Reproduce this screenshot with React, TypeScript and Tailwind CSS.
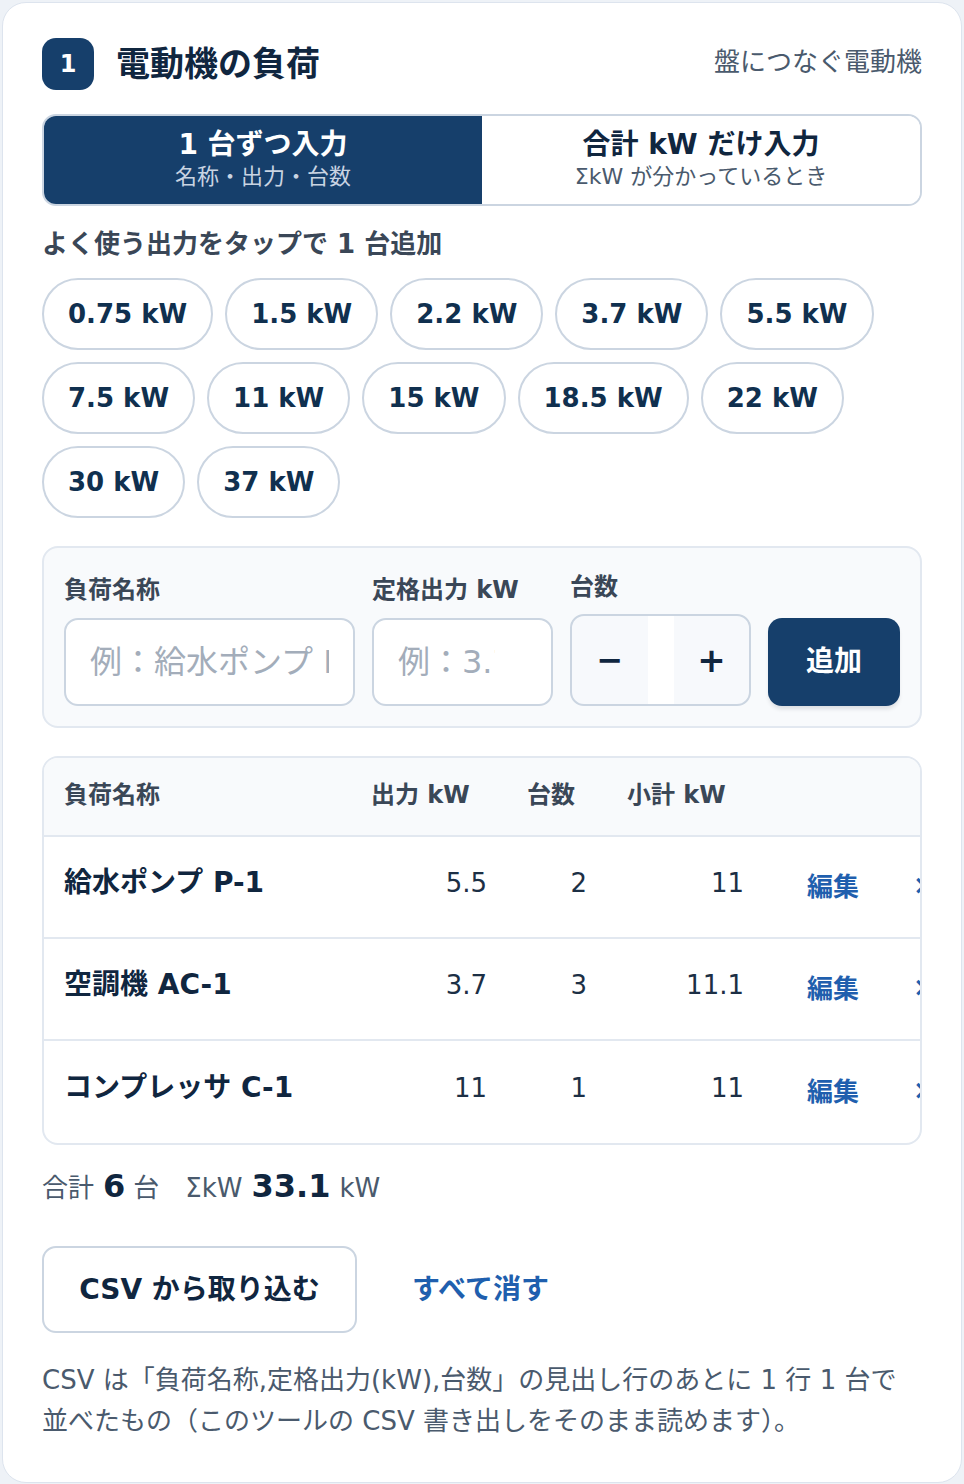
import React from 'react';

const chips = [
  ['0.75 kW', '1.5 kW', '2.2 kW', '3.7 kW', '5.5 kW'],
  ['7.5 kW', '11 kW', '15 kW', '18.5 kW', '22 kW'],
  ['30 kW', '37 kW'],
];

const rows = [
  { name: '給水ポンプ P-1', kw: '5.5', qty: '2', sub: '11' },
  { name: '空調機 AC-1', kw: '3.7', qty: '3', sub: '11.1' },
  { name: 'コンプレッサ C-1', kw: '11', qty: '1', sub: '11' },
];

const cols = 'grid grid-cols-[307px_156px_100px_157px_129px_120px]';

export default function App() {
  return (
    <div className="min-h-screen bg-[#eef2f7] p-[2px] font-['DejaVu_Sans','Noto_Sans_CJK_JP',sans-serif] text-[#10263f]">
      <div className="rounded-[24px] border border-[#dde4ee] bg-white px-[39px] pt-[35px] pb-[40px]">
        {/* header */}
        <div className="flex items-center justify-between">
          <div className="flex items-center gap-[22px]">
            <div className="flex h-[52px] w-[52px] items-center justify-center rounded-[14px] bg-[#163f6b] text-[24px] font-bold text-white">
              1
            </div>
            <h1 className="text-[34px] font-bold leading-none text-[#10263f]">電動機の負荷</h1>
          </div>
          <div className="pb-[4px] text-[26px] text-[#4a5a6d]">盤につなぐ電動機</div>
        </div>

        {/* mode switch */}
        <div className="mt-[24px] grid h-[92px] grid-cols-2 overflow-hidden rounded-[14px] border-2 border-[#cbd5e1]">
          <button className="flex flex-col items-center justify-center bg-[#163f6b] text-white">
            <span className="text-[28px] font-bold leading-[34px]">1 台ずつ入力</span>
            <span className="text-[22px] leading-[30px] text-[#c9d4e2]">名称・出力・台数</span>
          </button>
          <button className="flex flex-col items-center justify-center bg-white">
            <span className="text-[28px] font-bold leading-[34px] text-[#10263f]">合計 kW だけ入力</span>
            <span className="text-[22px] leading-[30px] text-[#4a5a6d]">ΣkW が分かっているとき</span>
          </button>
        </div>

        <div className="mt-[19px] text-[26px] font-bold leading-[39px] text-[#3a4757]">
          よく使う出力をタップで 1 台追加
        </div>

        {/* quick chips */}
        <div className="mt-[14px] flex flex-col gap-[12px]">
          {chips.map((row, i) => (
            <div key={i} className="flex gap-[12px]">
              {row.map((c) => (
                <button
                  key={c}
                  className="h-[72px] rounded-full border-2 border-[#cbd5e1] bg-white px-[24px] text-[26px] font-bold text-[#10304f]"
                >
                  {c}
                </button>
              ))}
            </div>
          ))}
        </div>

        {/* add form */}
        <div className="mt-[28px] rounded-[16px] border-2 border-[#e2e8f0] bg-[#f8fafc] px-5 pt-[21px] pb-5">
          <div className="grid grid-cols-[291px_181px_181px_1fr] items-end gap-[17px]">
            <label className="flex flex-col gap-[10px]">
              <span className="text-[24px] font-bold leading-[36px] text-[#3a4757]">負荷名称</span>
              <input
                className="h-[88px] w-full rounded-[14px] border-2 border-[#cbd5e1] bg-white px-6 text-[32px] outline-none placeholder:text-[#a3adba]"
                placeholder="例：給水ポンプ P-1"
              />
            </label>
            <label className="flex flex-col gap-[10px]">
              <span className="text-[24px] font-bold leading-[36px] text-[#3a4757]">定格出力 kW</span>
              <input
                className="h-[88px] w-full rounded-[14px] border-2 border-[#cbd5e1] bg-white pl-6 pr-[56px] text-[32px] outline-none placeholder:text-[#a3adba]"
                placeholder="例：3.7"
              />
            </label>
            <div className="flex flex-col gap-[9px]">
              <span className="text-[24px] font-bold leading-[36px] text-[#3a4757]">台数</span>
              <div className="flex h-[92px] overflow-hidden rounded-[14px] border-2 border-[#cbd5e1] bg-[#f7f9fc]">
                <button className="w-[76px] text-[32px] font-bold text-[#10263f]">−</button>
                <input className="w-[26px] bg-white outline-none" />
                <button className="flex-1 text-[34px] font-bold text-[#10263f]">+</button>
              </div>
            </div>
            <button className="h-[88px] rounded-[14px] bg-[#163f6b] text-[28px] font-bold text-white shadow-[0_4px_4px_-1px_rgba(15,23,42,0.12)]">
              追加
            </button>
          </div>
        </div>

        {/* list */}
        <div className="mt-[28px] overflow-hidden rounded-[16px] border-2 border-[#e2e8f0]">
          <div className="w-[1000px]">
            <div className={`${cols} h-[79px] items-center border-b-2 border-[#e2e8f0] bg-[#f8fafc] pb-[3px] text-[24px] font-bold text-[#3a4757]`}>
              <div className="pl-5">負荷名称</div>
              <div className="pl-5">出力 kW</div>
              <div className="pl-5">台数</div>
              <div className="pl-5">小計 kW</div>
              <div />
              <div />
            </div>
            {rows.map((r, i) => (
              <div
                key={r.name}
                className={`${cols} h-[102px] items-center ${i < rows.length - 1 ? 'border-b-2 border-[#e2e8f0]' : ''}`}
              >
                <div className="pb-[8px] pl-5 text-[28px] font-bold text-[#10263f]">{r.name}</div>
                <div className="pb-[8px] pr-5 text-right text-[26px] text-[#1c2f45]">{r.kw}</div>
                <div className="pb-[8px] pr-5 text-right text-[26px] text-[#1c2f45]">{r.qty}</div>
                <div className="pb-[8px] pr-5 text-right text-[26px] text-[#1c2f45]">{r.sub}</div>
                <div className="pl-[43px]">
                  <button className="text-[26px] font-bold text-[#1f5fae]">編集</button>
                </div>
                <div className="pl-[20px]">
                  <button className="pb-[4px] text-[26px] font-bold text-[#1f5fae]">×</button>
                </div>
              </div>
            ))}
          </div>
        </div>

        {/* totals */}
        <div className="mt-[17px] flex items-baseline leading-[48px] text-[#4a5a6d]">
          <span className="text-[26px]">合計</span>
          <span className="ml-[9px] text-[32px] font-bold text-[#10263f]">6</span>
          <span className="ml-[8px] text-[26px]">台</span>
          <span className="ml-[26px] text-[26px]">ΣkW</span>
          <span className="ml-[9px] text-[32px] font-bold text-[#10263f]">33.1</span>
          <span className="ml-[9px] text-[26px]">kW</span>
        </div>

        {/* actions */}
        <div className="mt-[34px] flex items-center gap-[55px]">
          <button className="h-[87px] w-[315px] rounded-[14px] border-2 border-[#cbd5e1] bg-white text-[28px] font-bold text-[#10263f]">
            CSV から取り込む
          </button>
          <button className="text-[28px] font-bold text-[#1f5fae]">すべて消す</button>
        </div>

        <p className="mt-[27px] text-[26px] leading-[41px] text-[#4a5a6d]">
          CSV は「負荷名称,定格出力(kW),台数」の見出し行のあとに 1 行 1 台で並べたもの（このツールの CSV 書き出しをそのまま読めます）。
        </p>
      </div>
    </div>
  );
}
